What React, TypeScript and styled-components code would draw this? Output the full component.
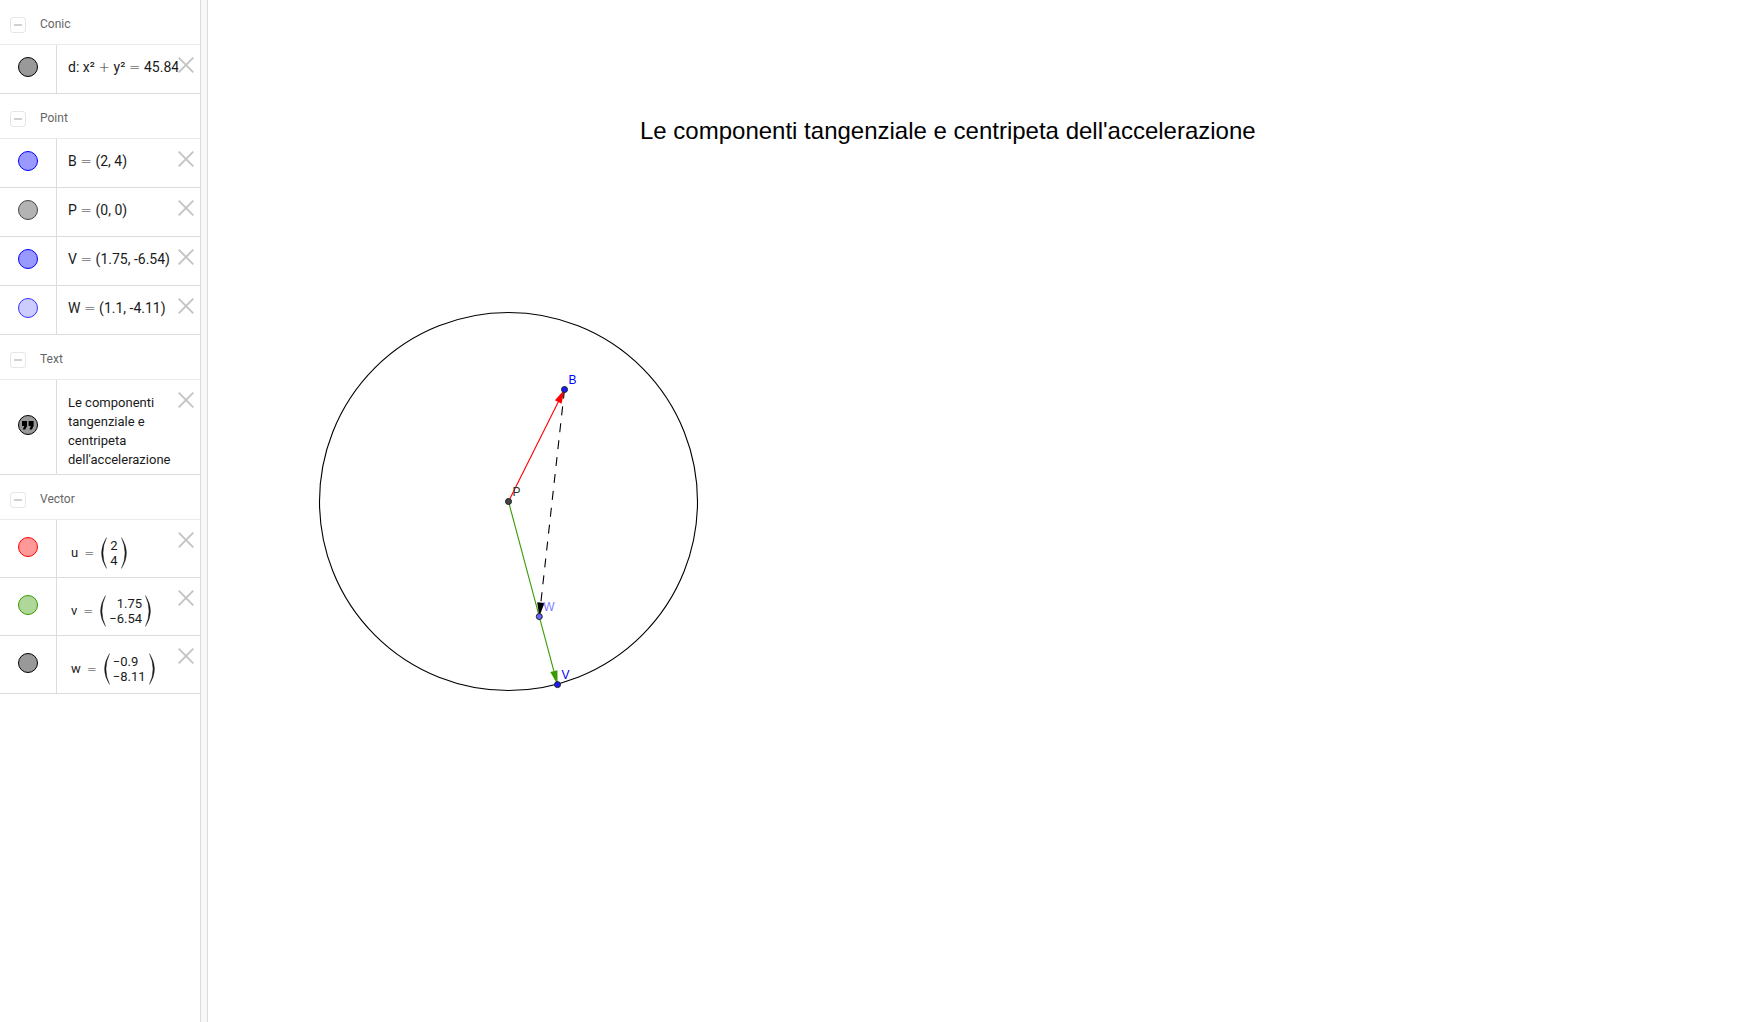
import React, { useState } from "react";
import styled, { createGlobalStyle } from "styled-components";

const GlobalStyle = createGlobalStyle`
  * { box-sizing: border-box; }
  body { margin: 0; background: #fff; overflow: hidden; }
  button { margin: 0; padding: 0; background: none; border: 0; cursor: pointer; }
`;

const Shell = styled.div`
  display: flex;
  min-height: 100vh;
  font-family: Roboto, "Liberation Sans", sans-serif;
`;

const AlgebraView = styled.aside`
  flex: 0 0 200px;
  min-width: 0;
`;

const Divider = styled.div`
  flex: 0 0 8px;
  background: #f8f8f8;
  border: solid #dcdcdc;
  border-width: 0 1px;
  cursor: ew-resize;
`;

const Graphics = styled.main`
  position: relative;
  flex: 1;
  min-width: 0;
  overflow: hidden;
`;

const GroupHeader = styled.header`
  display: flex;
  align-items: center;
  gap: 14px;
  height: 45px;
  padding: 6px 10px 0;
  border-bottom: 1px solid #ebebeb;
`;

const CollapseButton = styled.button`
  display: grid;
  place-items: center;
  width: 16px;
  height: 16px;
  border: 1px solid #e6e6e6;
  border-radius: 3px;

  &::before {
    content: "";
    width: 8px;
    height: 2px;
    background: #d0d0d0;
  }
`;

const GroupTitle = styled.h2`
  margin: 0;
  padding-bottom: 2px;
  color: #666;
  font-size: 12px;
  font-weight: 400;
  line-height: 16px;
`;

const List = styled.ul`
  margin: 0;
  padding: 0;
  list-style: none;
`;

const Row = styled.li`
  display: flex;
  border-bottom: 1px solid #dcdcdc;
`;

const MarbleCell = styled.div`
  display: flex;
  flex: 0 0 57px;
  align-items: center;
  justify-content: center;
  padding-bottom: 4px;
  border-right: 1px solid #dcdcdc;
`;

const Marble = styled.button<{ $fill: string; $line: string }>`
  display: grid;
  place-items: center;
  width: 20px;
  height: 20px;
  border: 1px solid ${(p) => p.$line};
  border-radius: 50%;
  background: ${(p) => p.$fill};
`;

const Value = styled.div<{ $multiline?: boolean }>`
  flex: 1;
  min-width: 0;
  padding: 13px 0 ${(p) => (p.$multiline ? 5 : 16)}px 11px;
  color: #1a1a1a;
  font-size: ${(p) => (p.$multiline ? 13 : 14)}px;
  line-height: 19px;
  white-space: ${(p) => (p.$multiline ? "normal" : "nowrap")};
`;

const Operator = styled.span<{ $small?: boolean }>`
  color: #333;
  font-family: "DejaVu Sans", sans-serif;
  font-size: ${(p) => (p.$small ? 12 : 14)}px;
  font-weight: 200;
  line-height: 1;
`;

const CloseButton = styled.button`
  flex: 0 0 16px;
  height: 16px;
  margin: 12px 6px 0 0;
  background: linear-gradient(to right, rgba(255, 255, 255, 0.6), #fff 4px);

  svg { display: block; }
`;

const Formula = styled.div`
  display: flex;
  flex: 1;
  align-items: center;
  gap: 6px;
  height: 57px;
  padding: 8px 0 0 14px;
  color: #1a1a1a;
  font-size: 13px;
  line-height: 15px;
`;

const Matrix = styled.span<{ $align: string }>`
  display: flex;
  align-items: center;
  gap: 3px;
  text-align: ${(p) => p.$align};
`;

const Entries = styled.span`
  display: grid;
`;

const CanvasTitle = styled.h1`
  position: absolute;
  top: 117px;
  left: 432px;
  margin: 0;
  color: #000;
  font: 400 24px/28px "Liberation Sans", Arial, sans-serif;
  white-space: nowrap;
`;

const Plane = styled.svg`
  position: absolute;
  inset: 0;
  width: 100%;
  height: 100%;
`;

const PointLabel = styled.text`
  font: 12px "Liberation Sans", Arial, sans-serif;
`;

type Item = {
  name: string;
  fill: string;
  line: string;
  text?: string;
  quote?: boolean;
  vector?: [string, string];
  align?: string;
};

const groups: { title: string; items: Item[] }[] = [
  { title: "Conic", items: [{ name: "d", fill: "#999", line: "#000", text: "d: x² + y² = 45.84" }] },
  {
    title: "Point",
    items: [
      { name: "B", fill: "#9999ff", line: "#0000ff", text: "B = (2, 4)" },
      { name: "P", fill: "#b3b3b3", line: "#444", text: "P = (0, 0)" },
      { name: "V", fill: "#9999ff", line: "#0000ff", text: "V = (1.75, -6.54)" },
      { name: "W", fill: "#ccccff", line: "#3333ff", text: "W = (1.1, -4.11)" },
    ],
  },
  {
    title: "Text",
    items: [
      { name: "text1", fill: "#999", line: "#000", quote: true, text: "Le componenti tangenziale e centripeta dell'accelerazione" },
    ],
  },
  {
    title: "Vector",
    items: [
      { name: "u", fill: "#ff9999", line: "#ff0000", vector: ["2", "4"], align: "left" },
      { name: "v", fill: "#aed799", line: "#389b00", vector: ["1.75", "−6.54"], align: "right" },
      { name: "w", fill: "#999", line: "#000", vector: ["−0.9", "−8.11"], align: "left" },
    ],
  },
];

const QuoteIcon = () => (
  <svg width="12" height="9" viewBox="0 0 12 9" aria-hidden="true">
    <path d="M0 0h5v5L3.3 8.6H.8L2.2 5H0zM6.6 0h5v5L9.9 8.6H7.4L8.8 5H6.6z" fill="#000" />
  </svg>
);

const CloseIcon = () => (
  <svg width="16" height="16" viewBox="0 0 16 16" aria-hidden="true">
    <path d="M.7.7l14.6 14.6M15.3.7L.7 15.3" stroke="#c4c4c4" strokeWidth="1.9" />
  </svg>
);

const Paren = ({ side }: { side: "left" | "right" }) => (
  <svg width="7" height="32" viewBox="0 0 7 32" aria-hidden="true">
    <path
      d={side === "left" ? "M6.6.5Q-3.6 16 6.6 31.5Q-.6 16 6.6.5z" : "M.4.5Q10.6 16 .4 31.5Q7.6 16 .4.5z"}
      fill="#1a1a1a"
      stroke="#1a1a1a"
      strokeWidth=".3"
    />
  </svg>
);

const Expression = ({ text }: { text: string }) => (
  <>
    {text.split(/([=+])/).map((part, i) => (i % 2 ? <Operator key={i}>{part}</Operator> : part))}
  </>
);

const AlgebraRow = ({ item }: { item: Item }) => (
  <Row>
    <MarbleCell>
      <Marble $fill={item.fill} $line={item.line} aria-label={`Show or hide ${item.name}`}>
        {item.quote && <QuoteIcon />}
      </Marble>
    </MarbleCell>
    {item.vector ? (
      <Formula>
        <span>{item.name}</span>
        <Operator $small>=</Operator>
        <Matrix $align={item.align!}>
          <Paren side="left" />
          <Entries>
            <span>{item.vector[0]}</span>
            <span>{item.vector[1]}</span>
          </Entries>
          <Paren side="right" />
        </Matrix>
      </Formula>
    ) : (
      <Value $multiline={item.quote}>
        <Expression text={item.text!} />
      </Value>
    )}
    <CloseButton aria-label={`Delete ${item.name}`}>
      <CloseIcon />
    </CloseButton>
  </Row>
);

const Group = ({ title, items }: { title: string; items: Item[] }) => {
  const [open, setOpen] = useState(true);
  return (
    <section>
      <GroupHeader>
        <CollapseButton aria-label={`Collapse ${title}`} aria-expanded={open} onClick={() => setOpen(!open)} />
        <GroupTitle>{title}</GroupTitle>
      </GroupHeader>
      {open && (
        <List>
          {items.map((item) => (
            <AlgebraRow key={item.name} item={item} />
          ))}
        </List>
      )}
    </section>
  );
};

type XY = [number, number];
const UNIT = 28;
const toScreen = ([x, y]: XY): XY => [300.5 + x * UNIT, 501.5 - y * UNIT];

const P = toScreen([0, 0]);
const B = toScreen([2, 4]);
const V = toScreen([1.75, -6.54]);
const W = toScreen([1.1, -4.11]);

const Arrow = ({ from, to, color, dash }: { from: XY; to: XY; color: string; dash?: string }) => {
  const length = Math.hypot(to[0] - from[0], to[1] - from[1]);
  const ux = (to[0] - from[0]) / length;
  const uy = (to[1] - from[1]) / length;
  const bx = to[0] - ux * 14;
  const by = to[1] - uy * 14;
  const half = 3.7;
  return (
    <g>
      <line x1={from[0]} y1={from[1]} x2={bx} y2={by} stroke={color} strokeWidth="1.1" strokeDasharray={dash} />
      <polygon
        points={`${to[0]},${to[1]} ${bx - uy * half},${by + ux * half} ${bx + uy * half},${by - ux * half}`}
        fill={color}
      />
    </g>
  );
};

const PlotPoint = ({ at, name, fill, ink }: { at: XY; name: string; fill: string; ink: string }) => (
  <g>
    <circle cx={at[0]} cy={at[1]} r="3" fill={fill} stroke="#222" strokeWidth="1" />
    <PointLabel x={at[0] + 4} y={at[1] - 6} fill={ink}>
      {name}
    </PointLabel>
  </g>
);

export default function App() {
  return (
    <Shell>
      <GlobalStyle />
      <AlgebraView aria-label="Algebra">
        {groups.map((group) => (
          <Group key={group.title} {...group} />
        ))}
      </AlgebraView>
      <Divider />
      <Graphics>
        <Plane role="img" aria-label="Vectors u, v and w in circle d">
          <circle cx={P[0]} cy={P[1]} r="189" fill="none" stroke="#000" strokeWidth="1.1" />
          <Arrow from={P} to={B} color="#ff0000" />
          <Arrow from={P} to={V} color="#389b00" />
          <Arrow from={B} to={W} color="#000" dash="9 8" />
          <PlotPoint at={B} name="B" fill="#1a1aff" ink="#0000ff" />
          <PlotPoint at={P} name="P" fill="#444" ink="#333" />
          <PlotPoint at={V} name="V" fill="#1a1aff" ink="#0000ff" />
          <PlotPoint at={W} name="W" fill="#6666ff" ink="#7f7fff" />
        </Plane>
        <CanvasTitle>Le componenti tangenziale e centripeta dell'accelerazione</CanvasTitle>
      </Graphics>
    </Shell>
  );
}
